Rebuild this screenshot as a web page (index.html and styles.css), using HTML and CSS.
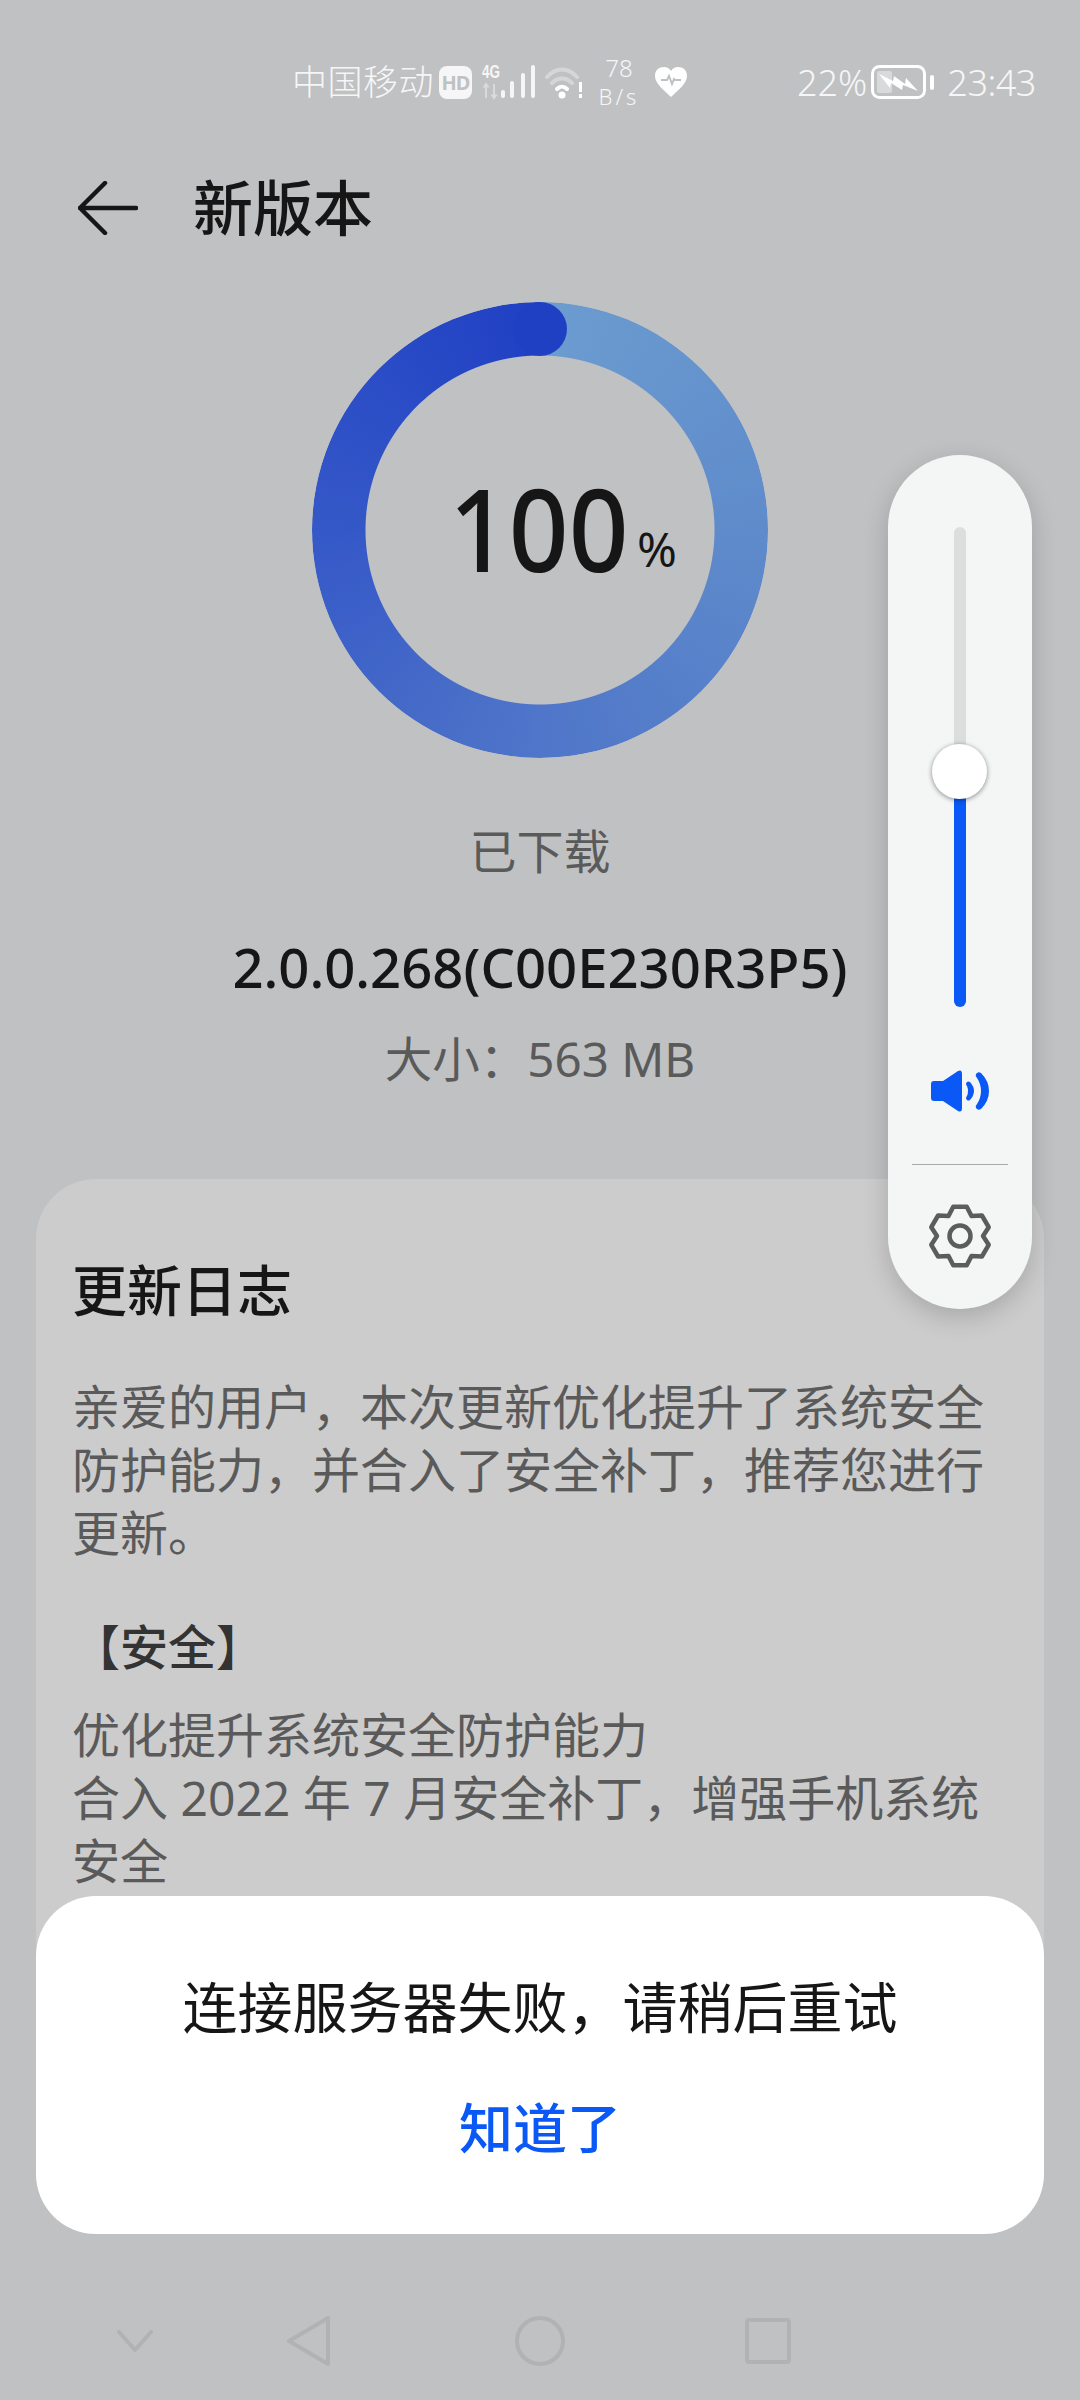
FILE: index.html
```html
<!DOCTYPE html>
<html lang="zh-CN">

<head>
  <meta charset="UTF-8">
  <meta name="viewport" content="width=device-width, initial-scale=1.0">
  <title>新版本</title>
  <link rel="stylesheet" href="styles.css">
</head>

<body>
  <div class="screen">
    <div class="status-bar">
      <span class="carrier">中国移动</span>
      <span class="hd-badge">HD</span>
      <svg class="signal" width="54" height="36" viewBox="0 0 54 36">
        <text class="signal-type" x="0" y="14" textLength="18" lengthAdjust="spacingAndGlyphs">4G</text>
        <path class="dim" d="M4 20v14M1.500 23.500L4 20L6.500 23.500M12 20v14M9.500 30.500L12 34L14.500 30.500" />
        <rect x="19" y="26" width="4" height="8" rx="2" />
        <rect x="28" y="17" width="4" height="17" rx="2" />
        <rect x="39" y="9" width="4" height="25" rx="2" />
        <rect x="49" y="1" width="4" height="33" rx="2" />
      </svg>
      <svg class="wifi" width="38" height="36" viewBox="0 0 38 36">
        <path class="wifi-dim" d="M2 13C11 3 23 3 32 13M7 19C13 13 21 13 27 19" />
        <path class="wifi-on" d="M12 25C15 22 19 22 22 25" />
        <circle cx="17" cy="31" r="3.500" fill="#fff" />
        <rect x="34" y="18" width="3" height="10" fill="#fff" />
        <rect x="34" y="30" width="3" height="4" fill="#fff" />
      </svg>
      <span class="net-speed"><span class="net-num">78</span><span class="net-unit">B/s</span></span>
      <svg class="heart" width="34" height="32" viewBox="0 0 34 32">
        <path fill="#fff" d="M17 31C11 25 1 18 1 10C1 4 5 1 10 1C13 1 15.500 2.500 17 5C18.500 2.500 21 1 24 1C29 1 33 4 33 10C33 18 23 25 17 31Z" />
        <path class="pulse" d="M7 14H13L15 10L18 18L20 13L21 14H27" />
      </svg>
      <span class="battery-pct">22%</span>
      <svg class="battery" width="63" height="34" viewBox="0 0 63 34">
        <rect x="1.500" y="1.500" width="52" height="31" rx="7" fill="none" stroke="#fff" stroke-width="3" />
        <rect class="dim-fill" x="6" y="6" width="15" height="22" rx="2" />
        <path fill="#fff" d="M8 9L22 16L23 11L34 19L35 13L47 26L32 20L31 25L20 18L19 23Z" />
        <rect x="59" y="10" width="4" height="15" rx="2" fill="#fff" />
      </svg>
      <span class="clock">23:43</span>
    </div>

    <div class="title-bar">
      <svg class="back" width="60" height="54" viewBox="0 0 60 54">
        <path d="M27 2L2 27L27 52M2 27H58" />
      </svg>
      <h1>新版本</h1>
    </div>

    <div class="ring">
      <div class="ring-track"></div>
      <div class="ring-cap"></div>
      <div class="ring-label"><span class="ring-num">100</span><span class="ring-pct">%</span></div>
    </div>

    <p class="state">已下载</p>
    <p class="version">2.0.0.268(C00E230R3P5)</p>
    <p class="size">大小：563 MB</p>

    <div class="card">
      <h2>更新日志</h2>
      <p class="log-text">亲爱的用户，本次更新优化提升了系统安全防护能力，并合入了安全补丁，推荐您进行更新。</p>
      <h3>【安全】</h3>
      <p class="log-list">优化提升系统安全防护能力<br>合入 2022 年 7 月安全补丁，增强手机系统安全</p>
    </div>

    <div class="nav-bar">
      <svg width="36" height="22" viewBox="0 0 36 22"><path d="M2 2L18 20L34 2" /></svg>
      <svg class="nav-back" width="44" height="50" viewBox="0 0 44 50"><path d="M41 2V48L2 25Z" /></svg>
      <svg class="nav-home" width="50" height="50" viewBox="0 0 50 50"><circle cx="25" cy="25" r="23" /></svg>
      <svg class="nav-recent" width="46" height="46" viewBox="0 0 46 46"><rect x="2" y="2" width="42" height="42" rx="2" /></svg>
    </div>

    <!-- volume panel, lies over the page -->
    <div class="volume">
      <div class="slider">
        <div class="slider-off"></div>
        <div class="slider-on"></div>
        <div class="knob"></div>
      </div>
      <svg class="speaker" width="58" height="44" viewBox="0 0 58 44">
        <path d="M3 12H12L27 2Q31 0 31 5V39Q31 44 27 42L12 32H3Q0 32 0 29V15Q0 12 3 12Z" />
        <path d="M36 13Q37 12 39 13Q47 22 39 31Q37 32 36 31Q34 29 36 27Q38 22 36 17Q34 15 36 13Z" />
        <path d="M45 5Q47 2 50 4Q58 12 58 22Q58 32 50 40Q47 42 45 39Q44 37 46 35Q50 29 50 22Q50 15 46 9Q44 7 45 5Z" />
      </svg>
      <div class="volume-line"></div>
      <svg class="gear" width="64" height="64" viewBox="0 0 64 64">
        <path d="M25.250 2.800H38.750L43.500 12.100L53.900 11.500L60.700 23.200L55 32L60.700 40.800L53.900 52.500L43.500 51.900L38.750 61.200H25.250L20.500 51.900L10.100 52.500L3.300 40.800L9 32L3.300 23.200L10.100 11.500L20.500 12.100Z" />
        <circle cx="32" cy="32" r="10.500" />
      </svg>
    </div>

    <!-- error dialog -->
    <div class="dialog">
      <p class="dialog-text">连接服务器失败，请稍后重试</p>
      <p class="dialog-btn">知道了</p>
    </div>
  </div>
</body>
</html>
```

FILE: styles.css
```css
:root {
  --bg: #c0c1c3;
  --card: #cccccc;
  --dark: #161616;
  --grey: #5a5a5a;
  --blue: #0a59f7;
  --sans: "Noto Sans", "Noto Sans CJK SC", sans-serif;
}

* {
  box-sizing: border-box;
}

body {
  margin: 0;
  background-color: var(--bg);
  font-family: var(--sans);
}

p,
h1,
h2,
h3 {
  margin: 0;
}

.screen {
  position: relative;
  display: flex;
  flex-direction: column;
  width: 1080px;
  height: 2400px;
  overflow: hidden;
  background-color: var(--bg);
}

/* status bar */
.status-bar {
  display: flex;
  align-items: center;
  height: 164px;
  padding-left: 292px;
  color: #f6f6f6;
  font-weight: 300;
  white-space: nowrap;
}

.carrier {
  flex: none;
  width: 143px;
  font-size: 35px;
  line-height: 56px;
  letter-spacing: 0.500px;
}

.hd-badge {
  width: 33px;
  height: 33px;
  margin-left: 4px;
  border-radius: 8px;
  background-color: #f6f6f6;
  color: var(--bg);
  font-size: 20px;
  font-weight: 700;
  line-height: 33px;
  text-align: center;
  letter-spacing: -1px;
}

.signal {
  margin-left: 10px;
  fill: #f6f6f6;
}

.signal-type {
  font-family: "Liberation Sans", sans-serif;
  font-size: 19px;
  font-weight: 700;
}

.dim {
  fill: none;
  stroke: #fff;
  stroke-width: 2;
  opacity: 0.4;
}

.wifi {
  margin-left: 9px;
}

.wifi-dim,
.wifi-on {
  fill: none;
  stroke: #fff;
  stroke-width: 4;
  stroke-linecap: round;
}

.wifi-dim {
  opacity: 0.35;
}

.net-speed {
  display: flex;
  flex-direction: column;
  align-items: center;
  width: 36px;
  margin-left: 18px;
  line-height: 28px;
}

.net-num {
  font-size: 24px;
}

.net-unit {
  font-size: 22px;
  letter-spacing: 3px;
}

.heart {
  margin-left: 17px;
}

.pulse {
  fill: none;
  stroke: var(--bg);
  stroke-width: 2;
}

.battery-pct {
  margin-left: 109px;
  font-size: 36px;
}

.battery {
  margin-left: 4px;
}

.dim-fill {
  fill: #fff;
  opacity: 0.4;
}

.clock {
  margin-left: 13px;
  font-size: 36px;
  letter-spacing: -0.500px;
}

/* title */
.title-bar {
  display: flex;
  align-items: center;
  height: 88px;
  padding-left: 78px;
}

.back path {
  fill: none;
  stroke: var(--dark);
  stroke-width: 4.500;
  stroke-linecap: round;
  stroke-linejoin: round;
}

h1 {
  margin-left: 55px;
  color: var(--dark);
  font-size: 60px;
  font-weight: 500;
  line-height: 88px;
}

/* progress ring */
.ring {
  position: relative;
  flex: none;
  width: 456px;
  height: 456px;
  margin: 50px auto 0;
}

.ring-track {
  width: 100%;
  height: 100%;
  border-radius: 50%;
  background: conic-gradient(#6c9cd0 0deg, #5f8bcb 90deg, #4f76c9 180deg, #3558c8 270deg, #2040c4 360deg);
  -webkit-mask: radial-gradient(circle, transparent 174px, #000 175px);
  mask: radial-gradient(circle, transparent 174px, #000 175px);
}

.ring-cap {
  position: absolute;
  top: 0;
  left: 201px;
  width: 54px;
  height: 54px;
  border-radius: 50%;
  background-color: #2040c4;
}

.ring-label {
  position: absolute;
  inset: 0;
  display: flex;
  align-items: baseline;
  padding: 156px 0 0 137px;
  color: var(--dark);
}

.ring-num {
  width: 179px;
  font-size: 115px;
  font-weight: 500;
  line-height: 140px;
  transform: scaleX(0.91);
  transform-origin: left;
}

.ring-pct {
  margin-left: 9px;
  font-size: 48px;
  transform: translateY(-5px);
}

/* version info */
.state {
  margin-top: 63px;
  color: var(--grey);
  font-size: 47px;
  line-height: 60px;
  text-align: center;
}

.version {
  margin-top: 54px;
  color: var(--dark);
  font-size: 54.400px;
  font-weight: 500;
  line-height: 64px;
  text-align: center;
}

.size {
  margin-top: 30px;
  color: var(--grey);
  font-size: 47.500px;
  line-height: 60px;
  text-align: center;
}

/* change log */
.card {
  flex: none;
  height: 1020px;
  margin: 90px 36px 0;
  padding: 76px 36px 0;
  border-radius: 60px;
  background-color: var(--card);
}

h2 {
  color: var(--dark);
  font-size: 55px;
  font-weight: 500;
  line-height: 70px;
}

.log-text {
  margin-top: 50px;
  color: var(--grey);
  font-size: 48px;
  line-height: 63px;
}

h3 {
  margin-top: 51px;
  color: #333;
  font-size: 48px;
  font-weight: 500;
  line-height: 63px;
}

.log-list {
  margin-top: 25px;
  color: var(--grey);
  font-size: 48px;
  line-height: 63px;
}

/* bottom navigation */
.nav-bar {
  position: absolute;
  left: 117px;
  bottom: 34px;
  display: flex;
  align-items: center;
  height: 50px;
}

.nav-bar svg {
  fill: none;
  stroke: #b2b2b2;
  stroke-width: 4;
  stroke-linejoin: round;
  stroke-linecap: round;
}

.nav-back {
  margin-left: 134px;
}

.nav-home {
  margin-left: 184px;
}

.nav-recent {
  margin-left: 180px;
}

/* volume panel */
.volume {
  position: absolute;
  top: 455px;
  left: 888px;
  display: flex;
  flex-direction: column;
  align-items: center;
  width: 144px;
  height: 854px;
  padding-top: 72px;
  border-radius: 72px;
  background-color: #f4f5f5;
  box-shadow: 0 8px 26px rgba(0, 0, 0, 0.18);
}

.slider {
  position: relative;
  display: flex;
  flex-direction: column;
  width: 12px;
  height: 480px;
}

.slider-off {
  height: 244px;
  border-radius: 6px 6px 0 0;
  background-color: #dcdddd;
}

.slider-on {
  flex: 1;
  border-radius: 0 0 6px 6px;
  background-color: var(--blue);
}

.knob {
  position: absolute;
  top: 217px;
  left: -22px;
  width: 55px;
  height: 55px;
  border-radius: 50%;
  background-color: #fff;
  box-shadow: 0 1px 5px rgba(0, 0, 0, 0.45);
}

.speaker {
  margin-top: 62px;
  fill: var(--blue);
}

.volume-line {
  width: 96px;
  height: 1px;
  margin-top: 51px;
  background-color: #a8a8a8;
}

.gear {
  margin-top: 39px;
  fill: none;
  stroke: #5c5c5c;
  stroke-width: 4.500;
  stroke-linejoin: round;
}

/* dialog */
.dialog {
  position: absolute;
  top: 1896px;
  left: 36px;
  display: flex;
  flex-direction: column;
  align-items: center;
  width: 1008px;
  height: 338px;
  padding-top: 71px;
  border-radius: 60px;
  background-color: #fff;
}

.dialog-text {
  color: var(--dark);
  font-size: 55px;
  line-height: 80px;
}

.dialog-btn {
  margin-top: 41px;
  color: var(--blue);
  font-size: 54px;
  font-weight: 500;
  line-height: 80px;
}
```
